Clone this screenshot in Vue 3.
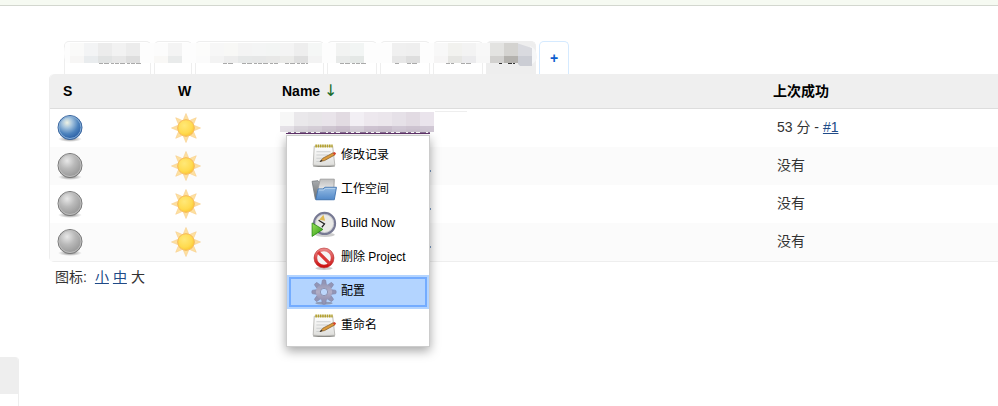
<script setup>
import { ref } from 'vue'

const tabs = [
  { size: 'w-wide', label: 'View 1' },
  { size: 'w-small', label: 'View 2' },
  { size: 'w-long', label: 'View 3' },
  { size: 'w-mid', label: 'View 4' },
  { size: 'w-mid', label: 'View 5' },
  { size: 'w-mid', label: 'View 6' },
  { size: 'w-mid active', label: 'View 7' }
]

// Column index, upper colour, lower colour of the mosaic that hides the tab titles
const mosaic = [
  [0, '#fafaf9', '#f7f6f5'], [1, '#f3f4f5', '#e9ecee'], [2, '#ececec', '#e1e3e3'], [3, '#f2f2f2', '#e7e7e7'], [4, '#ececec', '#dedede'],
  [6, '#fcfcfc', '#f9f8f6'], [7, '#f4f4f4', '#e9ebeb'],
  [9, '#fcfcfb', '#fbfbfb'], [10, '#f7f7f7', '#f3f3f3'], [11, '#f8f8f6', '#ededed'], [12, '#f4f4f4', '#e6e8e8'], [13, '#f4f5f5', '#e6e7e7'], [14, '#f3f5f4', '#e8e8e7'], [15, '#f4f4f4', '#ebebe9'], [16, '#eeeeee', '#dfdfdf'], [17, '#f5f7f6', '#f3f3f3'],
  [19, '#f2f3f2', '#e8eae9'], [20, '#f2f5f4', '#e4e8e6'],
  [23, '#f0f0f0', '#e7e7e7'], [24, '#efefef', '#dedede'],
  [26, '#f8f8f8', '#f6f5f5'], [27, '#f2f2ef', '#e6e6e3'], [28, '#f3f3f3', '#ebebed'], [29, '#f8f8f8', '#f7f7f7'],
  [30, '#e3e3e1', '#d2d1cf'], [31, '#d4d3d0', '#b4b2ae']
]
const nameTop = ['#f7f7f7', '#eae8eb', '#e7e5e8', '#e9e4ea', '#e2dbe2', '#f2eff4', '#ede8ee', '#ebe6ec', '#e6e1e8', '#e2dbe3', '#eae4ec']
const nameLow = ['#e5e1e7', '#d9d4db', '#d5ced7', '#cfc6d1', '#cbbfcd', '#d6cfd9', '#cec3d1', '#cbc0ce', '#d1c8d5', '#cec4d1', '#d0c7d4']
const tabInk = [[99, 42], [223, 12], [242, 36], [285, 23], [340, 26], [395, 4], [407, 12], [446, 8], [461, 11], [499, 3], [508, 7]]

const jobs = [
  { ball: 'blue', time: '53 分 - ', build: '#1' },
  { ball: 'grey', time: '没有' },
  { ball: 'grey', time: '没有' },
  { ball: 'grey', time: '没有' }
]
const menu = [
  { icon: 'note', text: '修改记录' },
  { icon: 'folder', text: '工作空间' },
  { icon: 'build', text: 'Build Now' },
  { icon: 'forbid', text: '删除 Project' },
  { icon: 'gear', text: '配置' },
  { icon: 'note', text: '重命名' }
]
const selected = ref(4)
const rays = [0, 45, 90, 135, 180, 225, 270, 315]
</script>

<template>
  <div class="page">
    <svg class="defs" aria-hidden="true">
      <defs>
        <radialGradient id="g-blue" cx=".38" cy=".3" r=".72">
          <stop offset="0" stop-color="#f0f3e4" /><stop offset=".3" stop-color="#a4c3dd" />
          <stop offset=".65" stop-color="#4c82bd" /><stop offset="1" stop-color="#245aa3" />
        </radialGradient>
        <radialGradient id="g-grey" cx=".38" cy=".3" r=".75">
          <stop offset="0" stop-color="#e8e8e8" /><stop offset=".45" stop-color="#b9b9b9" />
          <stop offset="1" stop-color="#929292" />
        </radialGradient>
        <radialGradient id="g-shade"><stop offset="0" stop-color="#555" stop-opacity=".8" /><stop offset="1" stop-color="#777" stop-opacity="0" /></radialGradient>
        <radialGradient id="g-sun" cx=".4" cy=".35" r=".7">
          <stop offset="0" stop-color="#ffe878" /><stop offset=".65" stop-color="#ffdb50" /><stop offset="1" stop-color="#fbc52f" />
        </radialGradient>
        <linearGradient id="g-folder" x2="0" y2="1"><stop stop-color="#94bbe3" /><stop offset="1" stop-color="#5289c9" /></linearGradient>
        <linearGradient id="g-back" x2="0" y2="1"><stop stop-color="#a9acae" /><stop offset="1" stop-color="#686c70" /></linearGradient>
        <linearGradient id="g-sheet" x2="0" y2="1"><stop stop-color="#bdbdbd" /><stop offset="1" stop-color="#f0f0f0" /></linearGradient>
        <linearGradient id="g-paper" x2="0" y2="1"><stop stop-color="#fff" /><stop offset="1" stop-color="#dededb" /></linearGradient>
        <linearGradient id="g-red" x2="0" y2="1"><stop stop-color="#e98585" /><stop offset="1" stop-color="#cc1010" /></linearGradient>
        <linearGradient id="g-gear" gradientUnits="userSpaceOnUse" x1="12" y1="0" x2="12" y2="24"><stop stop-color="#858bac" /><stop offset=".5" stop-color="#b3aec6" /><stop offset="1" stop-color="#8183a8" /></linearGradient>
        <linearGradient id="g-green" x2="1" y2="1"><stop stop-color="#9be15b" /><stop offset="1" stop-color="#2b9a12" /></linearGradient>
      </defs>
    </svg>

    <header class="topbar"></header>

    <main>
      <nav class="tabs">
        <a v-for="(t, i) in tabs" :key="i" href="#" class="tab" :class="t.size" :aria-label="t.label"></a>
        <a href="#" class="tab add">+</a>
        <svg class="tab-mask" width="476" height="26" viewBox="62 42 476 26" aria-hidden="true">
          <path d="M66 43H486V63H66Q62 53 66 43Z" fill="#fdfdfd" />
          <path d="M486 43H490V63H486Z" fill="#f7f7f7" />
          <path d="M530 46Q537 49 537 57 537 61 531 65Z" fill="#f6f7f8" />
          <g shape-rendering="crispEdges">
            <template v-for="m in mosaic" :key="m[0]">
              <rect :x="70 + m[0] * 14" y="43" width="14" height="13" :fill="m[1]" />
              <rect :x="70 + m[0] * 14" y="56" width="14" height="7" :fill="m[2]" />
            </template>
          </g>
          <path d="M518 43.5 532 48V56H518Z" fill="#d9dadf" />
          <path d="M518 56H532V66H520L518 64Z" fill="#cbcdd4" />
          <path v-for="(p, i) in tabInk" :key="'p' + i" :d="`M${p[0]} 63.5h${p[1]}`" :stroke="i > 8 ? '#333' : '#aaa'" stroke-dasharray="4 1 5 2 3 1" />
        </svg>
      </nav>

      <table class="jobs">
        <colgroup><col class="c-s"><col class="c-w"><col class="c-n"><col></colgroup>
        <thead>
          <tr><th>S</th><th>W</th><th>Name <span class="arrow">↓</span></th><th>上次成功</th></tr>
        </thead>
        <tbody>
          <tr v-for="(job, i) in jobs" :key="i">
            <td class="status">
              <svg width="28" height="28" viewBox="0 0 28 28">
                <ellipse cx="14" cy="25" rx="12" ry="3" fill="url(#g-shade)" />
                <circle cx="14" cy="13.5" r="12" :fill="`url(#g-${job.ball})`" :stroke="job.ball === 'blue' ? '#3a659e' : '#777'" />
                <circle cx="14" cy="13.5" r="11" fill="none" :stroke="job.ball === 'blue' ? '#88afd6' : '#bdbdbd'" />
              </svg>
            </td>
            <td class="weather">
              <svg width="30" height="30" viewBox="-15 -15 30 30">
                <path v-for="r in rays" :key="r" d="M-2.5-8.5 0-14.5 2.5-8.5Z" fill="#fde0a0" stroke="#f8cf8c" stroke-width=".6" :transform="`rotate(${r})`" />
                <circle r="8.3" fill="url(#g-sun)" stroke="#f8b954" />
              </svg>
            </td>
            <td class="name">
              <div v-if="i === 0" class="job-anchor">
                <svg class="name-mask" width="188" height="25" viewBox="280 110 188 25" aria-hidden="true">
                  <g shape-rendering="crispEdges">
                    <rect v-for="(c, n) in nameTop" :key="'a' + n" :x="280 + n * 14" y="112" width="14" height="14" :fill="c" />
                    <rect v-for="(c, n) in nameLow" :key="'b' + n" :x="280 + n * 14" y="126" width="14" height="6" :fill="c" />
                    <path d="M435 111.5h32" stroke="#eee" />
                    <path d="M288 132.5h142" stroke="#8b7396" stroke-dasharray="3 3 2 4 6 2" />
                    <path d="M286 133.5h144" stroke="#61336b" />
                  </g>
                </svg>
                <div class="menu" role="menu">
                  <a v-for="(m, k) in menu" :key="k" href="#" role="menuitem" :class="{ selected: selected === k }" @click.prevent="selected = k">
                    <svg width="26" height="26" viewBox="0 0 24 24">
                      <g v-if="m.icon === 'note'">
                        <path d="M3 3H20L22 20.5Q12 21.5 2 20.5Z" fill="url(#g-paper)" stroke="#b5b4b0" stroke-width=".8" />
                        <path d="M2 21.2Q12 22.3 22 21.2" fill="none" stroke="#8c8c88" />
                        <path d="M4 2.8H20" stroke="#b4a12c" stroke-width="2.8" stroke-dasharray="1.5 .6" />
                        <path d="M5 8H18M5 11H16M5 14H12M5 17H10" stroke="#cdd0d0" />
                        <path d="M8.5 17 11 14 20.5 9 22 11 12.5 16.2Z" fill="#dc9b3c" stroke="#865e2a" stroke-width=".7" />
                        <path d="M20 9.2 22 8.3 23.2 10 21.6 11.4Z" fill="#d5442c" /><path d="M8.3 17.2 10.3 16" stroke="#333" />
                      </g>
                      <g v-else-if="m.icon === 'folder'">
                        <path d="M1 4 6.5 3.4 8 5H19V20.5H4Z" fill="url(#g-back)" stroke="#7b7f83" stroke-width=".8" />
                        <path d="M8.5 2H21.5L21 13H6Z" fill="url(#g-sheet)" stroke="#999" stroke-width=".8" />
                        <path d="M6.5 11H11L13 9.5H23.5L21.5 21H4.5Z" fill="url(#g-folder)" stroke="#4779b4" stroke-width=".9" />
                        <path d="M7.2 12H11.5L13.5 10.5H22.4" fill="none" stroke="#bdd6ef" stroke-width=".8" />
                      </g>
                      <g v-else-if="m.icon === 'build'">
                        <ellipse cx="13" cy="22" rx="9" ry="2" fill="#aaa" opacity=".6" />
                        <circle cx="12.5" cy="11.5" r="9.7" fill="#e9e9e6" stroke="#777993" stroke-width="2" />
                        <circle cx="12.5" cy="11.5" r="8.4" fill="none" stroke="#bcbdc6" stroke-width=".7" />
                        <path d="M7.5 8 11.5 3.5 13 9Z" fill="#dfb850" /><path d="M7 8.5 12.5 12 10 15" fill="none" stroke="#222" stroke-width="1.1" />
                        <path d="M1 11 11 17 1 23.5Z" fill="url(#g-green)" stroke="#23850c" stroke-width=".7" />
                      </g>
                      <g v-else-if="m.icon === 'forbid'">
                        <ellipse cx="12" cy="21.5" rx="8" ry="1.5" fill="#999" opacity=".5" />
                        <circle cx="12" cy="12" r="7.8" fill="#f5f5f5" stroke="url(#g-red)" stroke-width="3" />
                        <path d="M6.5 6.5 17.5 17.5" stroke="#d93737" stroke-width="3" />
                        <circle cx="12" cy="12" r="9.2" fill="none" stroke="#bd3939" stroke-width=".6" />
                      </g>
                      <g v-else>
                        <ellipse cx="12" cy="22.3" rx="8" ry="1.4" fill="#778" opacity=".6" />
                        <path v-for="r in rays" :key="r" d="M9.6 6.5 10.3 1.8Q10.4 .8 11.2 .8H12.8Q13.6 .8 13.7 1.8L14.4 6.5Z" fill="#9395b5" stroke="#7e81a5" stroke-width=".5" :transform="`rotate(${r} 12 12)`" />
                        <circle cx="12" cy="12" r="5.4" fill="none" stroke="url(#g-gear)" stroke-width="4.2" />
                        <circle cx="12" cy="12" r="3.4" fill="#bcd6fb" stroke="#82829f" stroke-width=".7" />
                      </g>
                    </svg>
                    <span>{{ m.text }}</span>
                  </a>
                </div>
              </div>
              <i v-else class="tail"></i>
            </td>
            <td class="time">{{ job.time }}<a v-if="job.build" href="#">{{ job.build }}</a></td>
          </tr>
        </tbody>
      </table>

      <div class="sizes"><span>图标:</span><a href="#">小</a><a href="#">中</a><b>大</b></div>
    </main>

    <aside class="side"><div class="side-head"></div></aside>
  </div>
</template>

<style>
body { background: #fff; overflow: hidden; }
</style>

<style scoped>
* { box-sizing: border-box; }
.page { font: 14px/20px "Liberation Sans", "Noto Sans CJK SC", sans-serif; color: #333; }
.defs { position: absolute; width: 0; height: 0; }
.topbar { height: 6px; background: #f6faf2; border-bottom: 1px solid #d3d7cf; }
main { padding: 35px 0 0 49px; }
.tabs { position: relative; display: flex; gap: 3px; padding-left: 15px; height: 33px; }
.tab { border: 1px solid #eee; border-bottom: 0; border-radius: 5px 5px 0 0; background: #fff; }
.w-wide { width: 87px; }
.w-small { width: 38px; }
.w-long { width: 129px; }
.w-mid { width: 50px; }
.active { background: #eee; }
.add { width: 30px; border-color: #d5eaff; color: #0b5ed0; font-weight: bold; text-align: center; line-height: 32px; text-decoration: none; }
.tab-mask { position: absolute; left: 13px; top: 1px; }
.jobs { width: 100%; table-layout: fixed; border-collapse: separate; border-spacing: 0; border: 1px solid #eee; border-width: 0 0 1px 1px; border-radius: 5px 0 0 5px; }
.c-s { width: 115px; }
.c-w { width: 108px; }
.c-n { width: 492px; }
th { height: 35px; padding: 0 0 0 8px; text-align: left; color: #000; background: #efefef; border-bottom: 1px solid #ddd; }
th:first-child { padding-left: 13px; border-top-left-radius: 5px; }
th:nth-child(2) { padding-left: 13px; }
th:nth-child(3) { padding-left: 9px; }
.arrow { color: #176b2c; font: 16px/16px "DejaVu Sans", sans-serif; }
td { height: 38px; padding: 0; }
tbody tr:nth-child(even) td { background: #fbfbfb; }
td svg { display: block; }
.status { padding-left: 6px; }
.weather { padding-left: 6px; }
.time { padding: 0 0 2px 12px; }
.time a, .sizes a { color: #204a87; }
.name { padding-left: 7px; }
.job-anchor { position: relative; height: 36px; }
.name-mask { position: absolute; left: 0; top: 0; }
.menu { position: absolute; z-index: 2; left: 6px; top: 25px; width: 144px; padding: 3px 0; border: 1px solid #ccc; background: #fff; box-shadow: 0 4px 10px rgba(0, 0, 0, .35); }
.menu a { display: flex; align-items: center; gap: 4px; height: 34px; padding-left: 24px; color: #000; font-size: 12px; text-decoration: none; }
.menu a span { padding-bottom: 2px; }
.menu a.selected { background: #b3d4ff; outline: 2px solid #74acff; outline-offset: -4px; }
.tail { display: block; width: 1px; height: 2px; margin: 10px 0 0 150px; background: #7b9ac2; }
.sizes { display: flex; gap: 4px; padding: 5px 0 0 6px; }
.sizes span { margin-right: 4px; }
.sizes b { font-weight: normal; }
.side { margin-top: 70px; width: 19px; height: 49px; border-right: 1px solid #eee; border-radius: 0 4px 0 0; overflow: hidden; }
.side-head { height: 37px; background: #eee; }
</style>
